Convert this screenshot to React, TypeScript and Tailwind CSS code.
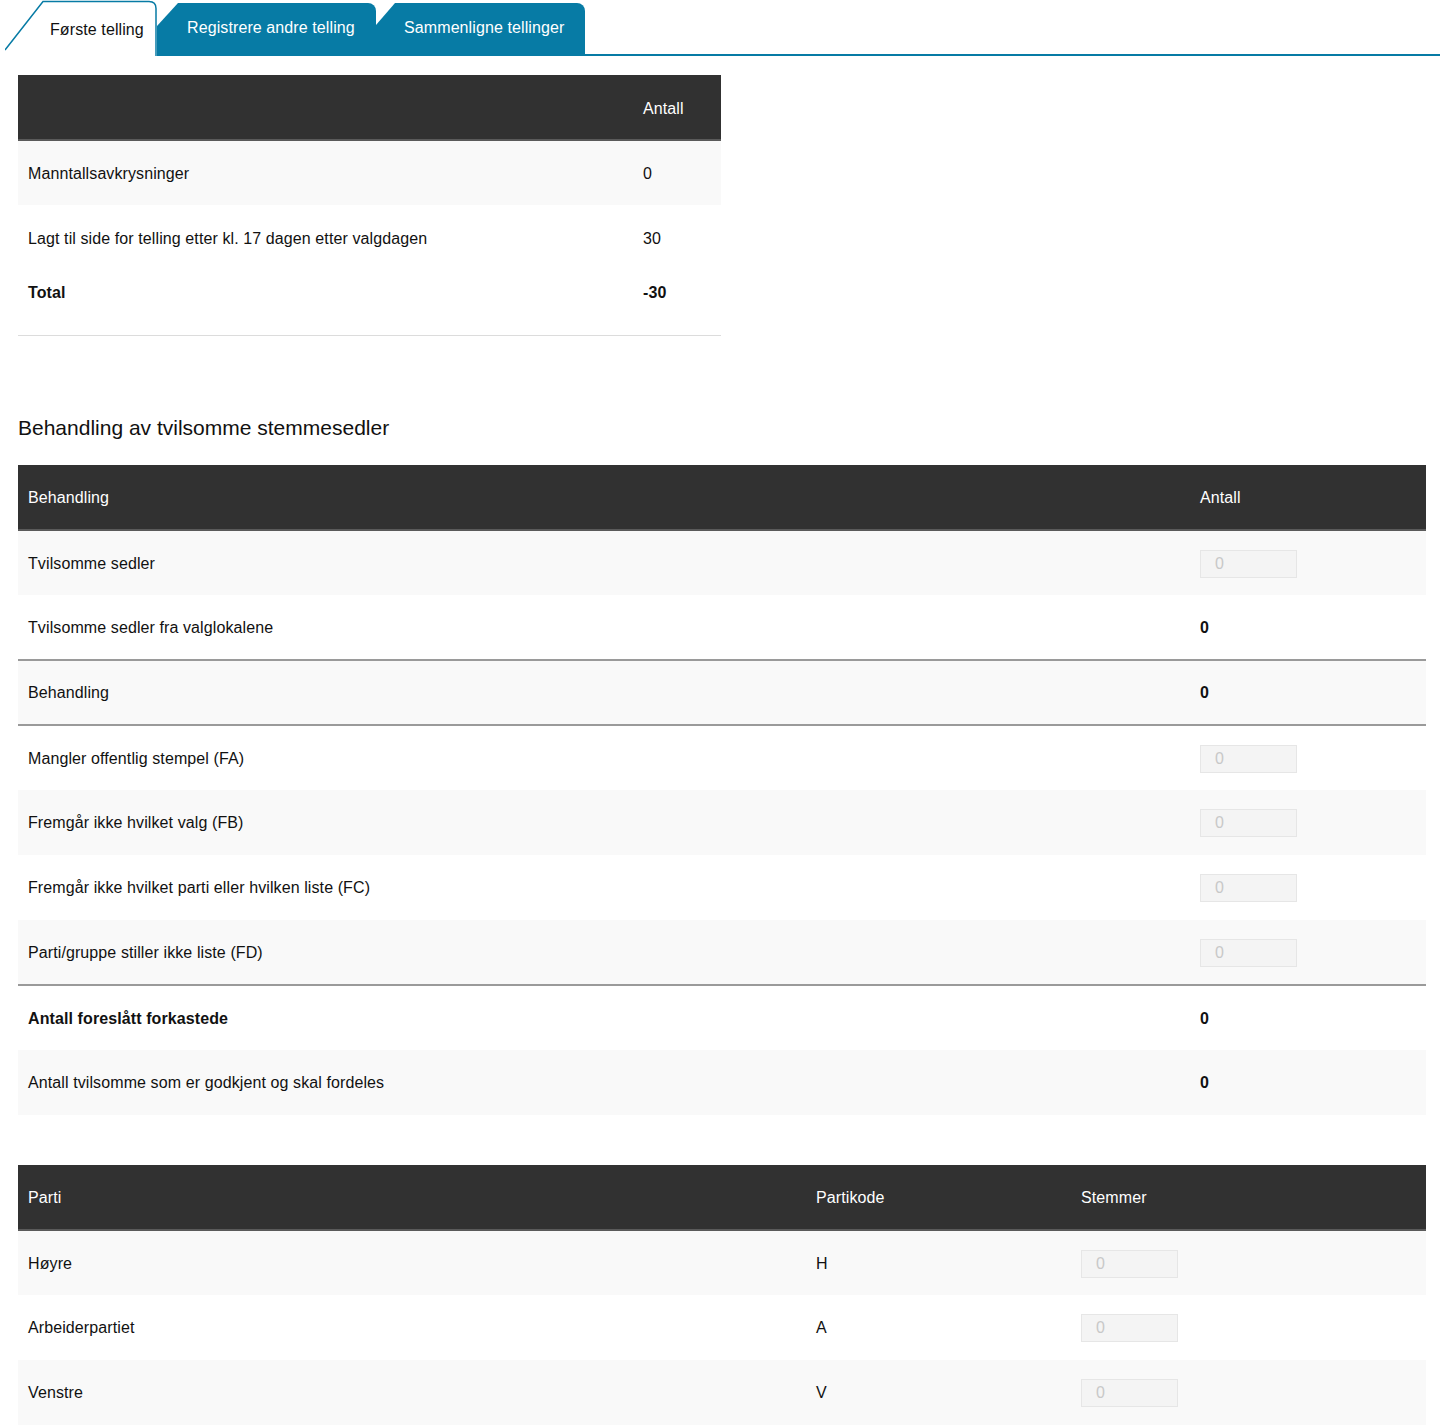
import React from 'react';

const blue = 'bg-[#077ba5]';

const Tabs: React.FC = () => (
  <div className="flex h-[56px] pl-[5px]">
    <div className="relative w-[152px] h-[56px]">
      <svg className="absolute inset-0" width="152" height="56" viewBox="0 0 152 56">
        <path d="M0 50 L38 1.5 H144 Q151 1.5 151 8.5 V56" fill="#fff" stroke="#077ba5" strokeWidth="1.5" />
      </svg>
      <span className="absolute left-[45px] top-[20px] text-[16px] leading-[20px] tracking-[0.1px] text-[#111]">Første telling</span>
    </div>
    <div className={`${blue} mt-[3px] w-[219px] h-[53px] rounded-tr-[8px] [clip-path:polygon(0_23px,21px_0,100%_0,100%_100%,0_100%)] pl-[30px] pt-[15px] text-[16px] leading-[20px] tracking-[0.1px] text-white`}>
      Registrere andre telling
    </div>
    <div className={`${blue} mt-[3px] w-[209px] h-[53px] rounded-tr-[8px] [clip-path:polygon(0_22px,19px_0,100%_0,100%_100%,0_100%)] pl-[28px] pt-[15px] text-[16px] leading-[20px] tracking-[0.1px] text-white`}>
      Sammenligne tellinger
    </div>
    <div className="flex-1 border-b-2 border-[#077ba5]" />
  </div>
);

const NumInput: React.FC = () => (
  <div className="w-[97px] h-[28px] bg-[#f4f4f4] border border-[#e6e6e6] pl-[14px] text-[16px] leading-[26px] text-[#c8c8c8]">0</div>
);

interface Row {
  label: string;
  value?: string;
  input?: boolean;
  boldLabel?: boolean;
  divider?: boolean;
}

const tvilRows: Row[] = [
  { label: 'Tvilsomme sedler', input: true },
  { label: 'Tvilsomme sedler fra valglokalene', value: '0', divider: true },
  { label: 'Behandling', value: '0', divider: true },
  { label: 'Mangler offentlig stempel (FA)', input: true },
  { label: 'Fremgår ikke hvilket valg (FB)', input: true },
  { label: 'Fremgår ikke hvilket parti eller hvilken liste (FC)', input: true },
  { label: 'Parti/gruppe stiller ikke liste (FD)', input: true, divider: true },
  { label: 'Antall foreslått forkastede', value: '0', boldLabel: true },
  { label: 'Antall tvilsomme som er godkjent og skal fordeles', value: '0' },
];

const parties = [
  { name: 'Høyre', code: 'H' },
  { name: 'Arbeiderpartiet', code: 'A' },
  { name: 'Venstre', code: 'V' },
];

const th = 'h-[65px] px-[10px] pt-[3px] text-left font-normal text-white align-middle border-b-2 border-[#5a5a5a]';
const td = 'h-[65px] px-[10px] pt-[2px] align-middle';

export default function App() {
  return (
    <div className="min-h-[1427px] bg-white text-[16px] tracking-[0.1px] text-[#111] font-['Liberation_Sans',Arial,sans-serif]">
      <Tabs />
      <div className="pl-[18px] pr-[14px]">
        <table className="mt-[19px] w-[703px] border-collapse table-fixed">
          <colgroup>
            <col className="w-[615px]" />
            <col />
          </colgroup>
          <thead>
            <tr className="bg-[#313131]">
              <th className={th}></th>
              <th className={th}>Antall</th>
            </tr>
          </thead>
          <tbody>
            <tr className="bg-[#f9f9f9]">
              <td className={td}>Manntallsavkrysninger</td>
              <td className={td}>0</td>
            </tr>
            <tr>
              <td className={td}>Lagt til side for telling etter kl. 17 dagen etter valgdagen</td>
              <td className={td}>30</td>
            </tr>
            <tr className="border-b border-[#dcdcdc]">
              <td className="h-[65px] px-[10px] pt-[11px] align-top font-bold">Total</td>
              <td className="h-[65px] px-[10px] pt-[11px] align-top font-bold">-30</td>
            </tr>
          </tbody>
        </table>

        <h2 className="mt-[80px] mb-[25px] text-[21px] leading-[24px] tracking-normal font-normal">Behandling av tvilsomme stemmesedler</h2>

        <table className="w-full border-collapse table-fixed">
          <colgroup>
            <col className="w-[1172px]" />
            <col />
          </colgroup>
          <thead>
            <tr className="bg-[#313131]">
              <th className={th}>Behandling</th>
              <th className={th}>Antall</th>
            </tr>
          </thead>
          <tbody>
            {tvilRows.map((r, i) => (
              <tr
                key={r.label}
                className={`${i % 2 === 0 ? 'bg-[#f9f9f9]' : 'bg-white'} ${r.divider ? 'border-b-2 border-[#9a9a9a]' : ''}`}
              >
                <td className={`${td} ${r.boldLabel ? 'font-bold' : ''}`}>{r.label}</td>
                <td className={td}>
                  {r.input ? <NumInput /> : <span className="font-bold">{r.value}</span>}
                </td>
              </tr>
            ))}
          </tbody>
        </table>

        <table className="mt-[50px] w-full border-collapse table-fixed">
          <colgroup>
            <col className="w-[788px]" />
            <col className="w-[265px]" />
            <col />
          </colgroup>
          <thead>
            <tr className="bg-[#313131]">
              <th className={th}>Parti</th>
              <th className={th}>Partikode</th>
              <th className={th}>Stemmer</th>
            </tr>
          </thead>
          <tbody>
            {parties.map((p, i) => (
              <tr key={p.code} className={i % 2 === 0 ? 'bg-[#f9f9f9]' : 'bg-white'}>
                <td className={td}>{p.name}</td>
                <td className={td}>{p.code}</td>
                <td className={td}>
                  <NumInput />
                </td>
              </tr>
            ))}
          </tbody>
        </table>
      </div>
    </div>
  );
}
